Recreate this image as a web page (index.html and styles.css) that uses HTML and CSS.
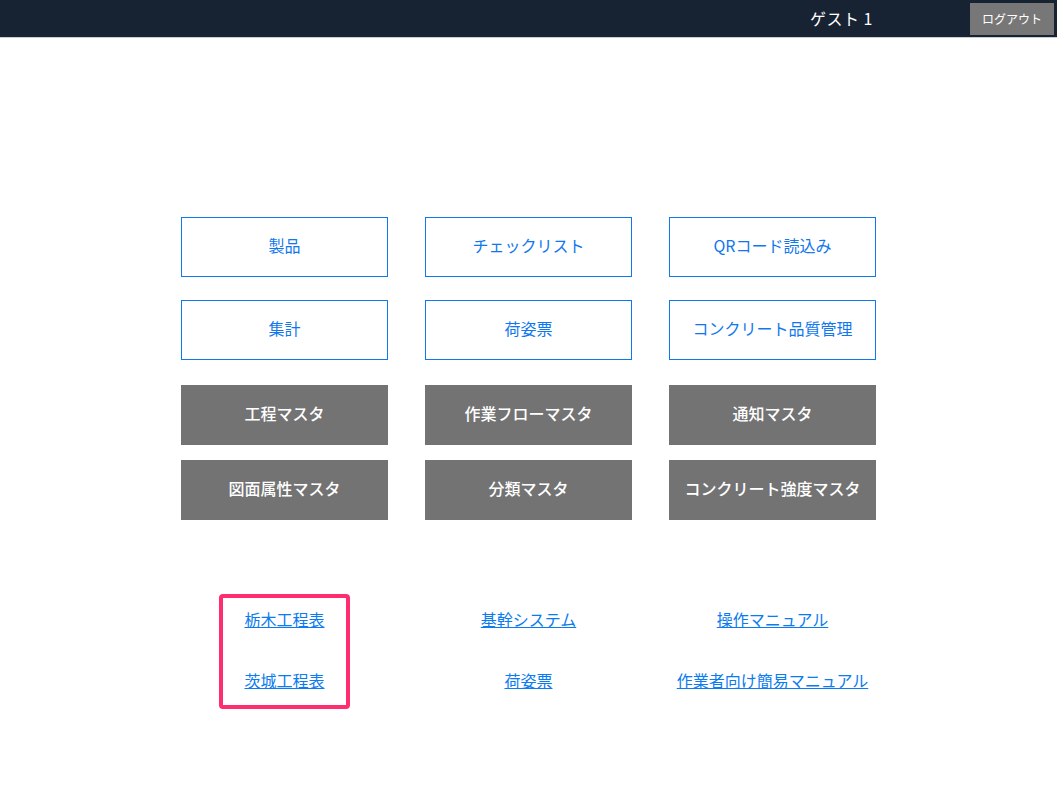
FILE: index.html
```html
<!DOCTYPE html>
<html lang="ja">
<head>
<meta charset="utf-8">
<title>メニュー</title>
<link rel="stylesheet" href="styles.css">
</head>
<body>
<header class="topbar">
  <span class="user">ゲスト 1</span>
  <button class="logout">ログアウト</button>
</header>
<main class="menu">
  <div class="row row-1">
    <a class="btn btn-outline">製品</a>
    <a class="btn btn-outline">チェックリスト</a>
    <a class="btn btn-outline">QRコード読込み</a>
  </div>
  <div class="row row-2">
    <a class="btn btn-outline">集計</a>
    <a class="btn btn-outline">荷姿票</a>
    <a class="btn btn-outline">コンクリート品質管理</a>
  </div>
  <div class="row row-3">
    <a class="btn btn-gray">工程マスタ</a>
    <a class="btn btn-gray">作業フローマスタ</a>
    <a class="btn btn-gray">通知マスタ</a>
  </div>
  <div class="row row-4">
    <a class="btn btn-gray">図面属性マスタ</a>
    <a class="btn btn-gray">分類マスタ</a>
    <a class="btn btn-gray">コンクリート強度マスタ</a>
  </div>
  <div class="links">
    <div class="link-col highlighted">
      <a class="link" href="#">栃木工程表</a>
      <a class="link" href="#">茨城工程表</a>
    </div>
    <div class="link-col">
      <a class="link" href="#">基幹システム</a>
      <a class="link" href="#">荷姿票</a>
    </div>
    <div class="link-col">
      <a class="link" href="#">操作マニュアル</a>
      <a class="link" href="#">作業者向け簡易マニュアル</a>
    </div>
  </div>
</main>
</body>
</html>
```

FILE: styles.css
```css
* { box-sizing: border-box; }
html, body { margin: 0; padding: 0; background: #fff; }
body {
  font-family: "Noto Sans CJK JP", "Noto Sans", sans-serif;
  color: #212529;
}
.topbar {
  height: 38px;
  background: #172233;
  border-bottom: 1px solid #c9ccd1;
  display: flex;
  align-items: center;
  justify-content: flex-end;
  padding: 0 3px 2px 0;
}
.user {
  color: #fff;
  font-size: 16px;
  letter-spacing: 0.5px;
  margin-right: 97px;
}
.logout {
  width: 84px;
  height: 32px;
  background: #777777;
  color: #fff;
  border: none;
  font-family: inherit;
  font-size: 12px;
  padding: 0;
  margin-top: 2px;
}
.menu {
  width: 695px;
  margin: 179px auto 0 181px;
}
.row {
  display: grid;
  grid-template-columns: repeat(3, 207px);
  column-gap: 37px;
}
.row-2 { margin-top: 23px; }
.row-3 { margin-top: 25px; }
.row-4 { margin-top: 15px; }
.btn {
  height: 60px;
  display: flex;
  align-items: center;
  justify-content: center;
  font-size: 16px;
  text-decoration: none;
  padding-bottom: 4px;
}
.btn-outline {
  border: 1px solid #1177ee;
  color: #1177ee;
}
.btn-gray {
  background: #737373;
  color: #fff;
  font-weight: 500;
}
.links {
  margin-top: 74px;
  display: grid;
  grid-template-columns: repeat(3, 207px);
  column-gap: 37px;
}
.link-col {
  display: flex;
  flex-direction: column;
  align-items: center;
  gap: 40px;
  padding-top: 15px;
}
.highlighted {
  width: 131px;
  justify-self: center;
  border: 4px solid #ff2d6e;
  border-radius: 4px;
  padding: 11px 0 14px;
}
.link {
  color: #0a7bf0;
  font-size: 16px;
  text-decoration: underline;
  line-height: 21px;
}
```
